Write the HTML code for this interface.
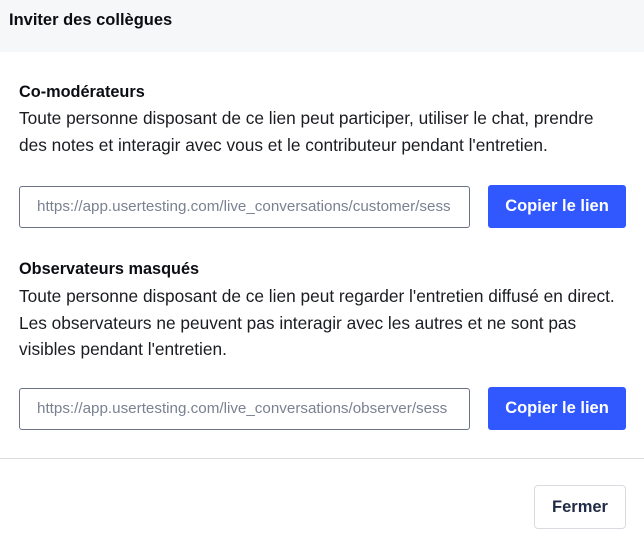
<!DOCTYPE html>
<html><head><meta charset="utf-8"><style>
*{margin:0;padding:0;box-sizing:border-box}
body{width:644px;height:543px;background:#fff;font-family:"Liberation Sans",sans-serif;color:#0b0d12;position:relative;overflow:hidden}
.hdr{position:absolute;left:0;top:0;width:644px;height:52px;background:#f6f7f9}
.abs{position:absolute;white-space:nowrap}
.t{left:9px;top:11px;font-size:16.5px;font-weight:bold}
h3{position:absolute;left:19px;font-size:16.3px;font-weight:bold}
p{position:absolute;left:19px;font-size:17.3px;line-height:26.5px;color:#1a1c22;white-space:nowrap}
.in{position:absolute;left:19px;width:451px;height:42px;border:1px solid #6b7384;border-radius:3px;font-size:15.2px;color:#7a8191;padding:11px 0 0 17px;white-space:nowrap;overflow:hidden}
.btn{position:absolute;left:488px;width:138px;height:43px;background:#3158ff;border-radius:3px;color:#fff;font-weight:bold;font-size:16.5px;text-align:center;line-height:43px}
.hr{position:absolute;left:0;top:458px;width:644px;height:1px;background:#dcdee2}
.f{position:absolute;left:534px;top:485px;width:92px;height:44px;border:1px solid #d8dbe0;border-radius:4px;text-align:center;line-height:42px;font-weight:bold;font-size:16.5px;color:#1f2a44}
</style></head><body>
<div class="hdr"></div>
<div class="abs t">Inviter des collègues</div>
<h3 style="top:83px">Co-modérateurs</h3>
<p style="top:105px">Toute personne disposant de ce lien peut participer, utiliser le chat, prendre<br>des notes et interagir avec vous et le contributeur pendant l'entretien.</p>
<div class="in" style="top:186px">https://app.usertesting.com/live_conversations/customer/sess</div>
<div class="btn" style="top:185px">Copier le lien</div>
<h3 style="top:260px">Observateurs masqués</h3>
<p style="top:283px">Toute personne disposant de ce lien peut regarder l'entretien diffusé en direct.<br>Les observateurs ne peuvent pas interagir avec les autres et ne sont pas<br>visibles pendant l'entretien.</p>
<div class="in" style="top:388px">https://app.usertesting.com/live_conversations/observer/sess</div>
<div class="btn" style="top:387px">Copier le lien</div>
<div class="hr"></div>
<div class="f">Fermer</div>
</body></html>
